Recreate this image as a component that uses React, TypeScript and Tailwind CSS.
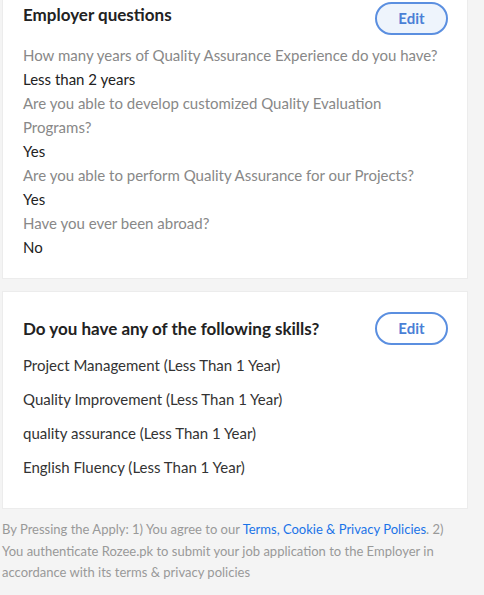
import React from 'react';

const qa = [
  { q: 'How many years of Quality Assurance Experience do you have?', a: 'Less than 2 years' },
  { q: 'Are you able to develop customized Quality Evaluation Programs?', a: 'Yes' },
  { q: 'Are you able to perform Quality Assurance for our Projects?', a: 'Yes' },
  { q: 'Have you ever been abroad?', a: 'No' },
];

const skills = [
  'Project Management (Less Than 1 Year)',
  'Quality Improvement (Less Than 1 Year)',
  'quality assurance (Less Than 1 Year)',
  'English Fluency (Less Than 1 Year)',
];

function EditButton({ active }: { active?: boolean }) {
  return (
    <button
      className={
        active
          ? 'shrink-0 w-[73px] h-[33px] rounded-full border-2 border-[#5b8fe0] bg-[#eef4fc] text-[#4a7fd6] text-[15px] font-bold'
          : 'shrink-0 w-[73px] h-[33px] rounded-full border-2 border-[#5b8fe0] bg-white text-[#4a7fd6] text-[15px] font-bold'
      }
    >
      Edit
    </button>
  );
}

export default function App() {
  return (
    <div className="min-h-[595px] bg-[#f4f4f4] font-['Lato',sans-serif] pl-[2px] w-[484px] overflow-hidden">
      <div className="w-[466px] bg-white border border-[#ececec] border-t-0 pl-[20px] pr-[19px] pb-[19px]">
        <div className="flex items-start justify-between pt-[2px]">
          <h2 className="text-[17px] font-bold text-[#222] leading-[24px] mt-[1px]">Employer questions</h2>
          <EditButton active />
        </div>
        <div className="mt-[8px] text-[15px] leading-[24px]">
          {qa.map((item) => (
            <div key={item.q}>
              <div className="text-[#888]">{item.q}</div>
              <div className="text-[#222]">{item.a}</div>
            </div>
          ))}
        </div>
      </div>

      <div className="mt-[12px] w-[466px] bg-white border border-[#ececec] pl-[20px] pr-[19px] pt-[20px] pb-[29px]">
        <div className="flex items-center justify-between">
          <h2 className="text-[17px] font-bold text-[#222]">Do you have any of the following skills?</h2>
          <EditButton />
        </div>
        <div className="mt-[8px] text-[15px] text-[#333] flex flex-col gap-[10px] leading-[24px]">
          {skills.map((s) => (
            <div key={s}>{s}</div>
          ))}
        </div>
      </div>

      <p className="mt-[10px] w-[452px] text-[13px] leading-[21.5px] text-[#999]">
        By Pressing the Apply: 1) You agree to our{' '}
        <a href="#" className="text-[#1a73e8]">Terms, Cookie &amp; Privacy Policies</a>. 2) You authenticate Rozee.pk to submit your job application to the Employer in accordance with its terms &amp; privacy policies
      </p>
    </div>
  );
}
